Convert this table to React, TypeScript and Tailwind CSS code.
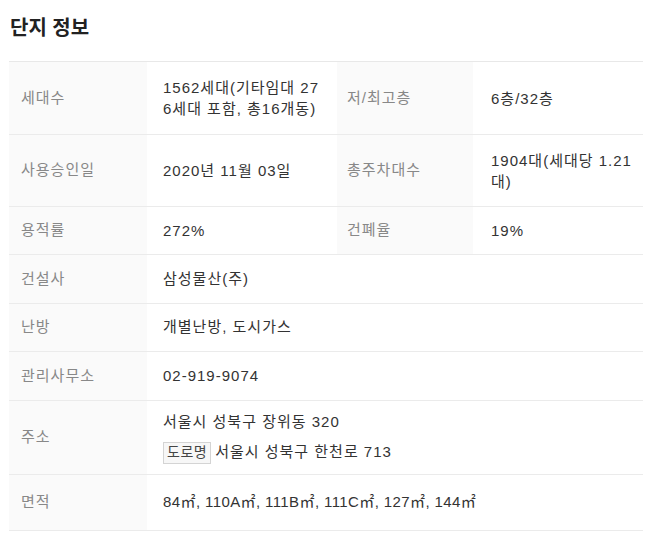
import React from 'react'

type Row = {
  h: string
  label: string
  value: React.ReactNode
  label2?: string
  value2?: React.ReactNode
}

const rows: Row[] = [
  {
    h: 'h-[73px]',
    label: '세대수',
    value: (
      <>
        <span className="block whitespace-nowrap">1562세대(기타임대 27</span>
        <span className="block whitespace-nowrap">6세대 포함, 총16개동)</span>
      </>
    ),
    label2: '저/최고층',
    value2: '6층/32층',
  },
  {
    h: 'h-[72px]',
    label: '사용승인일',
    value: '2020년 11월 03일',
    label2: '총주차대수',
    value2: (
      <>
        <span className="block whitespace-nowrap">1904대(세대당 1.21</span>
        <span className="block whitespace-nowrap">대)</span>
      </>
    ),
  },
  { h: 'h-[48px]', label: '용적률', value: '272%', label2: '건폐율', value2: '19%' },
  { h: 'h-[49px]', label: '건설사', value: '삼성물산(주)' },
  { h: 'h-[48px]', label: '난방', value: '개별난방, 도시가스' },
  { h: 'h-[49px]', label: '관리사무소', value: '02-919-9074' },
  {
    h: 'h-[74px]',
    label: '주소',
    value: (
      <div className="flex flex-col gap-[9px]">
        <span className="leading-[21px]">서울시 성북구 장위동 320</span>
        <span className="flex items-center gap-1">
          <span className="inline-flex h-[22px] items-center border border-[#d4d4d4] bg-[#f7f7f7] px-[3px] text-[14px] tracking-[0.5px] text-[#444]">
            도로명
          </span>
          <span>서울시 성북구 한천로 713</span>
        </span>
      </div>
    ),
  },
  {
    h: 'h-[56px]',
    label: '면적',
    value: <span className="tracking-[0.4px]">84㎡, 110A㎡, 111B㎡, 111C㎡, 127㎡, 144㎡</span>,
  },
]

export default function App() {
  return (
    <div className="min-h-[548px] bg-white font-['Liberation_Sans','Noto_Sans_CJK_KR',sans-serif] text-[15px]">
      <h1 className="ml-[10px] pt-[14px] text-[20px] font-bold leading-[28px] text-[#222]">단지 정보</h1>

      <div className="ml-[9px] mt-[19px] w-[634px] border-t border-[#e8e8e8] tracking-[1px]">
        {rows.map(row => (
          <div key={row.label} className={`flex border-b border-[#ebebeb] ${row.h}`}>
            <div className="flex w-[138px] shrink-0 items-center bg-[#fafafa] pl-[12px] text-[#888]">
              {row.label}
            </div>
            {row.label2 ? (
              <>
                <div className="flex w-[190px] shrink-0 items-center pl-[16px] leading-[21px] text-[#333]">
                  <div>{row.value}</div>
                </div>
                <div className="flex w-[136px] shrink-0 items-center bg-[#fafafa] pl-[10px] text-[#888]">
                  {row.label2}
                </div>
                <div className="flex flex-1 items-center pl-[18px] leading-[21px] text-[#333]">
                  <div>{row.value2}</div>
                </div>
              </>
            ) : (
              <div className="flex flex-1 items-center pl-[16px] text-[#333]">
                <div>{row.value}</div>
              </div>
            )}
          </div>
        ))}
      </div>
    </div>
  )
}
